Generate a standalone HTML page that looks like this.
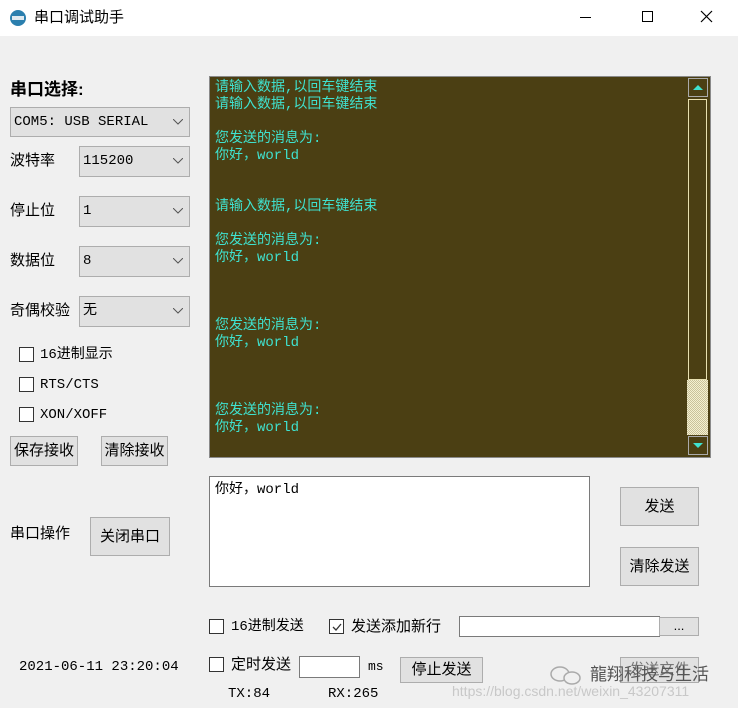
<!DOCTYPE html><html><head><meta charset="utf-8"><style>
*{margin:0;padding:0;box-sizing:border-box}
body{width:738px;height:708px;background:#f0f0f0;position:relative;overflow:hidden;font-family:"Liberation Mono","Noto Sans CJK SC",monospace;font-size:14px;color:#000}
.a{position:absolute;line-height:16px}
.ui{font-family:"Liberation Sans","Noto Sans CJK SC",sans-serif}
.cb{position:absolute;background:#e1e1e1;border:1px solid #adadad;padding:0 0 0 3px;font-size:14px;line-height:28px}
.cb svg{position:absolute;right:6px;top:11px}
.btn{position:absolute;background:#e1e1e1;border:1px solid #adadad;text-align:center;font-family:"Liberation Sans","Noto Sans CJK SC",sans-serif;font-size:15px}
.ck{position:absolute;width:15px;height:15px;border:1px solid #333;background:#fff}
.t div{height:17px;line-height:17px;overflow:visible;white-space:pre;color:#3fe2cf;font-size:14px}
</style></head><body>
<div class="a" style="left:0;top:0;width:738px;height:36px;background:#fff"></div>
<svg class="a" style="left:9px;top:9px" width="18" height="18"><circle cx="9" cy="9" r="8" fill="#2b7fae"/><rect x="3" y="7" width="12" height="4" fill="#dfe9ef"/></svg>
<div class="a ui" style="left:34px;top:10px;font-size:15px">串口调试助手</div>
<div class="a" style="left:580px;top:17px;width:11px;height:1px;background:#000"></div>
<div class="a" style="left:642px;top:11px;width:11px;height:11px;border:1px solid #000"></div>
<svg class="a" style="left:700px;top:10px" width="13" height="13"><path d="M1 1L12 12M12 1L1 12" stroke="#000" stroke-width="1.2"/></svg>

<div class="a ui" style="left:10px;top:82px;font-size:17px;font-weight:bold">串口选择:</div>
<div class="cb" style="left:10px;top:107px;width:180px;height:30px">COM5: USB SERIAL<svg width="10" height="6"><path d="M0 0L5 5L10 0" fill="none" stroke="#555"/></svg></div>
<div class="a ui" style="left:10px;top:153px;font-size:15px">波特率</div>
<div class="cb" style="left:79px;top:146px;width:111px;height:31px">115200<svg width="10" height="6"><path d="M0 0L5 5L10 0" fill="none" stroke="#555"/></svg></div>
<div class="a ui" style="left:10px;top:203px;font-size:15px">停止位</div>
<div class="cb" style="left:79px;top:196px;width:111px;height:31px">1<svg width="10" height="6"><path d="M0 0L5 5L10 0" fill="none" stroke="#555"/></svg></div>
<div class="a ui" style="left:10px;top:253px;font-size:15px">数据位</div>
<div class="cb" style="left:79px;top:246px;width:111px;height:31px">8<svg width="10" height="6"><path d="M0 0L5 5L10 0" fill="none" stroke="#555"/></svg></div>
<div class="a ui" style="left:10px;top:303px;font-size:15px">奇偶校验</div>
<div class="cb" style="left:79px;top:296px;width:111px;height:31px">无<svg width="10" height="6"><path d="M0 0L5 5L10 0" fill="none" stroke="#555"/></svg></div>
<div class="ck" style="left:19px;top:347px"></div><div class="a" style="left:40px;top:347px">16进制显示</div>
<div class="ck" style="left:19px;top:377px"></div><div class="a" style="left:40px;top:377px">RTS/CTS</div>
<div class="ck" style="left:19px;top:407px"></div><div class="a" style="left:40px;top:407px">XON/XOFF</div>
<div class="btn" style="left:10px;top:436px;width:68px;height:30px;line-height:28px">保存接收</div>
<div class="btn" style="left:101px;top:436px;width:67px;height:30px;line-height:28px">清除接收</div>
<div class="a ui" style="left:10px;top:526px;font-size:15px">串口操作</div>
<div class="btn" style="left:90px;top:517px;width:80px;height:39px;line-height:37px">关闭串口</div>
<div class="a" style="left:19px;top:659px">2021-06-11 23:20:04</div>

<div class="a" style="left:209px;top:76px;width:502px;height:382px;background:#4b3f13;border:1px solid #8a8a8a;overflow:hidden">
<div class="t a" style="left:5px;top:3px">
<div>请输入数据,以回车键结束</div><div>请输入数据,以回车键结束</div><div></div>
<div>您发送的消息为:</div><div>你好，world</div><div></div><div></div>
<div>请输入数据,以回车键结束</div><div></div>
<div>您发送的消息为:</div><div>你好，world</div><div></div><div></div><div></div>
<div>您发送的消息为:</div><div>你好，world</div><div></div><div></div><div></div>
<div>您发送的消息为:</div><div>你好，world</div></div>
<div class="a" style="left:478px;top:1px;width:20px;height:19px;border:1px solid #aaa"><svg width="18" height="17"><path d="M4 11L9 6L14 11Z" fill="#3fe2cf"/></svg></div>
<div class="a" style="left:478px;top:22px;width:19px;height:281px;border:1px solid #e8e0b0"></div>
<div class="a" style="left:477px;top:303px;width:21px;height:55px;background:repeating-conic-gradient(#c9c29a 0 25%,#f5f0d0 0 50%) 0 0/2px 2px"></div>
<div class="a" style="left:478px;top:359px;width:20px;height:19px;border:1px solid #aaa"><svg width="18" height="17"><path d="M4 6L9 11L14 6Z" fill="#3fe2cf"/></svg></div>
</div>

<div class="a" style="left:209px;top:476px;width:381px;height:111px;background:#fff;border:1px solid #7a7a7a;padding:5px 5px">你好，world</div>
<div class="btn" style="left:620px;top:487px;width:79px;height:39px;line-height:37px">发送</div>
<div class="btn" style="left:620px;top:547px;width:79px;height:39px;line-height:37px">清除发送</div>

<div class="ck" style="left:209px;top:619px"></div><div class="a" style="left:231px;top:619px">16进制发送</div>
<div class="ck" style="left:329px;top:619px"><svg class="a" style="left:1px;top:1px" width="12" height="12"><path d="M2 6L5 9L10 3" fill="none" stroke="#333" stroke-width="1.3"/></svg></div><div class="a ui" style="left:351px;top:619px;font-size:15px">发送添加新行</div>
<div class="a" style="left:459px;top:616px;width:201px;height:21px;background:#fff;border:1px solid #7a7a7a"></div>
<div class="btn" style="left:659px;top:617px;width:40px;height:19px;line-height:15px;font-size:13px">...</div>
<div class="ck" style="left:209px;top:657px"></div><div class="a ui" style="left:231px;top:657px;font-size:15px">定时发送</div>
<div class="a" style="left:299px;top:656px;width:61px;height:22px;background:#fff;border:1px solid #7a7a7a"></div>
<div class="a" style="left:368px;top:659px;font-size:13px">ms</div>
<div class="btn" style="left:400px;top:657px;width:83px;height:26px;line-height:24px">停止发送</div>
<div class="btn" style="left:620px;top:657px;width:79px;height:26px;line-height:24px;color:#777">发送文件</div>
<div class="a" style="left:228px;top:686px">TX:84</div>
<div class="a" style="left:328px;top:686px">RX:265</div>
<svg class="a" style="left:548px;top:664px" width="36" height="22"><ellipse cx="12" cy="10" rx="9" ry="7" fill="none" stroke="#aaa" stroke-width="1.5"/><ellipse cx="24" cy="14" rx="8" ry="6" fill="#f0f0f0" stroke="#aaa" stroke-width="1.5"/></svg>
<div class="a ui" style="left:590px;top:667px;font-size:17px;color:#555">龍翔科技与生活</div>
<div class="a ui" style="left:452px;top:683px;font-size:14px;color:#c8c8c8">https://blog.csdn.net/weixin_43207311</div>
</body></html>
